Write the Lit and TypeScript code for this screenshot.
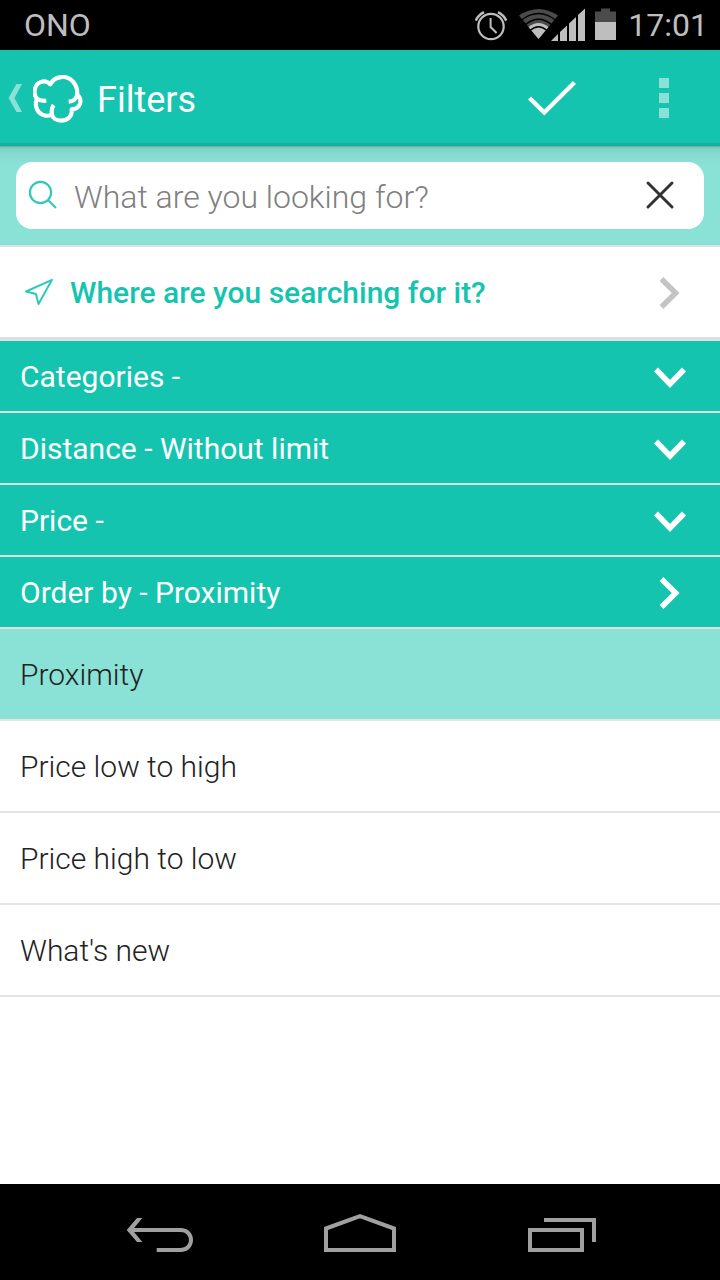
import { LitElement, html, css, svg } from "lit";
import { customElement, property, state } from "lit/decorators.js";
import { classMap } from "lit/directives/class-map.js";

const chevronDown = html`<svg width="40" height="40" viewBox="0 0 40 40" aria-hidden="true">
  <path d="M6 13.5L20 28L34 13.5" fill="none" stroke="currentColor" stroke-width="5.6" />
</svg>`;

const chevronRight = html`<svg width="40" height="40" viewBox="0 0 40 40" aria-hidden="true">
  <path d="M11.5 7L25.7 21L11.5 35" fill="none" stroke="currentColor" stroke-width="5.4" />
</svg>`;

@customElement("status-bar")
class StatusBar extends LitElement {
  static styles = css`
    :host {
      display: flex;
      align-items: center;
      height: 50px;
      padding: 0 12px 0 24px;
      background: #000;
      color: #bebebe;
      font-size: 32px;
      line-height: 52px;
    }
    .carrier {
      flex: 1;
    }
    .icons {
      display: flex;
      align-items: center;
      gap: 10px;
      margin-right: 12px;
    }
    svg {
      display: block;
    }
  `;

  render() {
    return html`
      <span class="carrier">ONO</span>
      <span class="icons">
        <svg width="34" height="34" viewBox="1 0 34 34" aria-hidden="true">
          <g fill="none" stroke="#bebebe" stroke-width="2.2">
            <circle cx="17" cy="18.5" r="12.7" />
            <path d="M16.6 10V19L22.6 25" stroke-width="2" />
            <path d="M1.8 12.6Q4.4 7 10 4.2M24 4.2Q29.6 7 32.2 12.6" stroke-width="2.6" />
          </g>
        </svg>
        <svg width="66" height="34" viewBox="0 0 66 34" aria-hidden="true">
          <path d="M0 7.5Q19.5 -5.5 39 7.5L19.5 31Z" fill="#4b4b4b" />
          <path d="M9.5 19Q19.5 11 29.5 19L19.5 31Z" fill="#bebebe" />
          <g fill="none" stroke="#000" stroke-width="1.3">
            <path d="M2.5 12Q19.5 -1 36.5 12" />
            <path d="M6 17Q19.5 5.5 33 17" />
            <path d="M11 22.5Q19.5 15 28 22.5" />
          </g>
          <g fill="#bebebe">
            <path d="M32 33L39 26V33Z" />
            <path d="M41 24L48 17.5V33H41Z" />
            <path d="M50 15.5L57 9V33H50Z" />
            <path d="M59 7L66 0.5V33H59Z" />
          </g>
        </svg>
        <svg width="21" height="34" viewBox="0 0 21 34" aria-hidden="true">
          <path d="M6 0.5H15V3.5H21V32H0V3.5H6Z" fill="#4b4b4b" />
          <path d="M0 14H21V32H0Z" fill="#bebebe" />
        </svg>
      </span>
      <time>17:01</time>
    `;
  }
}

@customElement("app-bar")
class AppBar extends LitElement {
  static styles = css`
    :host {
      display: flex;
      align-items: stretch;
      height: 96px;
      background: #15c4af;
      box-shadow: inset 0 -3px #12b19e;
      color: #fff;
    }
    button {
      display: flex;
      align-items: center;
      border: 0;
      margin: 0;
      padding: 0;
      background: none;
      color: inherit;
      font: inherit;
      cursor: pointer;
    }
    .up {
      gap: 10px;
      padding: 0 8px;
    }
    h1 {
      flex: 1;
      margin: 0;
      padding-left: 6px;
      font-size: 36px;
      font-weight: 400;
      line-height: 100px;
    }
    .action {
      justify-content: center;
      width: 112px;
    }
  `;

  render() {
    return html`
      <button class="up" aria-label="Back">
        <svg width="15" height="30" viewBox="0 0 15 30" aria-hidden="true">
          <path d="M0.5 15L8.5 1H14L6.5 15L14 29H8.5Z" fill="#8ae1d5" />
        </svg>
        <svg width="50" height="50" viewBox="15 7 150 150" aria-hidden="true">
          <g fill="none" stroke="#fff" stroke-width="12.5" stroke-linejoin="round">
            <path d="M55 90Q38 92 27 84C20 77 19 68 20 60C22 34 50 24 67 41C80 15 117 12 135 33C147 47 150 62 146 77Q140 92 122 93" />
            <path d="M147 72C160 82 160 96 152 107Q144 116 131 116C133 138 118 150 99 150C84 150 74 142 72 132Q69 115 77 103" />
            <path d="M27 84C21 97 23 114 32 124C42 135 58 138 72 132" />
          </g>
        </svg>
      </button>
      <h1>Filters</h1>
      <button class="action" aria-label="Apply filters">
        <svg width="48" height="40" viewBox="0 0 48 40" aria-hidden="true">
          <path d="M1.5 20L16.3 34.5L46.5 4.5" fill="none" stroke="#fff" stroke-width="4.4" />
        </svg>
      </button>
      <button class="action" aria-label="More options">
        <svg width="10" height="40" viewBox="0 0 10 40" aria-hidden="true">
          <path d="M0 0H10V10H0ZM0 15H10V25H0ZM0 30H10V40H0Z" fill="#8ae1d5" />
        </svg>
      </button>
    `;
  }
}

@customElement("search-panel")
class SearchPanel extends LitElement {
  @state() private query = "";

  static styles = css`
    :host {
      display: block;
      padding: 16px;
      border-bottom: 2px solid #dedfe1;
      background: linear-gradient(#68a9a0 0, #7fcfc3 2px, #86dbcf 8px, #8ae1d5 20px);
    }
    .box {
      display: flex;
      align-items: center;
      height: 67px;
      padding: 0 14px 0 12px;
      border-radius: 16px;
      background: #fff;
    }
    label,
    svg {
      display: block;
    }
    input {
      flex: 1;
      min-width: 0;
      height: 64px;
      margin: 0;
      padding: 2px 0 0 16px;
      border: 0;
      outline: 0;
      background: none;
      color: #222;
      font: inherit;
      font-size: 32px;
      font-weight: 300;
    }
    input::placeholder {
      color: #808080;
      opacity: 1;
    }
    button {
      display: flex;
      align-items: center;
      justify-content: center;
      width: 60px;
      height: 64px;
      padding: 0;
      border: 0;
      background: none;
      cursor: pointer;
    }
  `;

  render() {
    return html`
      <div class="box">
        <label for="query" aria-label="Search">
          <svg width="30" height="32" viewBox="0 0 30 32" aria-hidden="true">
            <g fill="none" stroke="#2fcab7" stroke-width="2.2">
              <circle cx="12.5" cy="12.5" r="10.6" />
              <path d="M20 20L28 28" />
            </g>
          </svg>
        </label>
        <input
          id="query"
          type="text"
          placeholder="What are you looking for?"
          .value=${this.query}
          @input=${(e: Event) => (this.query = (e.target as HTMLInputElement).value)}
        />
        <button aria-label="Clear" @click=${() => (this.query = "")}>
          <svg width="30" height="32" viewBox="0 0 30 32" aria-hidden="true">
            <path d="M3 3L27 27M27 3L3 27" stroke="#333" stroke-width="3" stroke-linecap="round" />
          </svg>
        </button>
      </div>
    `;
  }
}

@customElement("filter-row")
class FilterRow extends LitElement {
  @property() label = "";
  @property({ type: Boolean }) open = false;

  static styles = css`
    :host {
      display: block;
      border-bottom: 2px solid #dedfe1;
    }
    button {
      display: flex;
      align-items: center;
      justify-content: space-between;
      width: 100%;
      height: 70px;
      padding: 0 30px 0 20px;
      border: 0;
      background: #15c4af;
      color: #fff;
      font: inherit;
      font-size: 30px;
      text-align: left;
      cursor: pointer;
    }
    svg {
      display: block;
    }
  `;

  render() {
    return html`
      <button aria-expanded=${this.open ? "true" : "false"}>
        <span>${this.label}</span>
        ${this.open ? chevronRight : chevronDown}
      </button>
    `;
  }
}

@customElement("nav-bar")
class NavBar extends LitElement {
  static styles = css`
    :host {
      display: flex;
      height: 96px;
      padding: 0 60px;
      background: #000;
    }
    button {
      flex: 1;
      display: flex;
      align-items: center;
      justify-content: center;
      padding: 0;
      border: 0;
      background: none;
      cursor: pointer;
    }
  `;

  private icon(shape: unknown) {
    return html`<svg width="80" height="48" viewBox="0 0 80 48" aria-hidden="true">
      <g fill="none" stroke="#a0a0a0" stroke-width="4">${shape}</g>
    </svg>`;
  }

  render() {
    return html`
      <button aria-label="Back">
        ${this.icon(svg`
          <path d="M10 22H60.5C74.5 22 74.5 42 60.5 42H36.7" />
          <path d="M6.7 22L17 10H22.3L12.5 22L22.3 34H17Z" fill="#a0a0a0" stroke="none" />
        `)}
      </button>
      <button aria-label="Home">
        ${this.icon(svg`<path d="M6 20.5L40 8.2L74 20.5V42H6Z" />`)}
      </button>
      <button aria-label="Recent apps">
        ${this.icon(svg`<path d="M10 22H62V42H10ZM24 12H74V34" />`)}
      </button>
    `;
  }
}

@customElement("app-root")
class AppRoot extends LitElement {
  @state() private order = "Proximity";

  private readonly orders = ["Proximity", "Price low to high", "Price high to low", "What's new"];

  static styles = css`
    :host {
      display: flex;
      flex-direction: column;
      min-height: 100vh;
      background: #fff;
      color: #222;
      font-family: Roboto, "Noto Sans", sans-serif;
    }
    main {
      flex: 1;
    }
    .place {
      display: flex;
      align-items: center;
      height: 90px;
      padding: 0 30px 0 24px;
      border-bottom: 4px solid #dedfe1;
      color: #15c4af;
      font-size: 30px;
      font-weight: 500;
      text-decoration: none;
    }
    .place-text {
      flex: 1;
      padding-left: 16px;
    }
    .place-arrow {
      color: #c4c4c4;
    }
    svg {
      display: block;
    }
    fieldset {
      margin: 0;
      padding: 0;
      border: 0;
    }
    .option {
      display: flex;
      align-items: center;
      height: 90px;
      padding: 0 20px;
      border-bottom: 2px solid #e4e4e4;
      font-size: 30px;
      font-weight: 300;
      cursor: pointer;
    }
    .option.selected {
      background: #8ae1d5;
    }
    .option input {
      appearance: none;
      width: 0;
      height: 0;
      margin: 0;
    }
  `;

  render() {
    return html`
      <status-bar></status-bar>
      <app-bar></app-bar>
      <main>
        <search-panel></search-panel>
        <a class="place" href="#place">
          <svg width="30" height="30" viewBox="0 0 30 30" aria-hidden="true">
            <path d="M2 14.5L28 2.8L14.5 27L12 17Z" fill="none" stroke="#2fcab7" stroke-width="2" stroke-linejoin="round" />
          </svg>
          <span class="place-text">Where are you searching for it?</span>
          <span class="place-arrow">${chevronRight}</span>
        </a>
        <filter-row label="Categories -"></filter-row>
        <filter-row label="Distance - Without limit"></filter-row>
        <filter-row label="Price -"></filter-row>
        <filter-row label="Order by - ${this.order}" open></filter-row>
        <fieldset aria-label="Order by">
          ${this.orders.map((name) => {
            const selected = name === this.order;
            return html`<label class="option ${classMap({ selected })}">
              <input
                type="radio"
                name="order"
                .checked=${selected}
                @change=${() => (this.order = name)}
              />
              <span>${name}</span>
            </label>`;
          })}
        </fieldset>
      </main>
      <nav-bar></nav-bar>
    `;
  }
}
